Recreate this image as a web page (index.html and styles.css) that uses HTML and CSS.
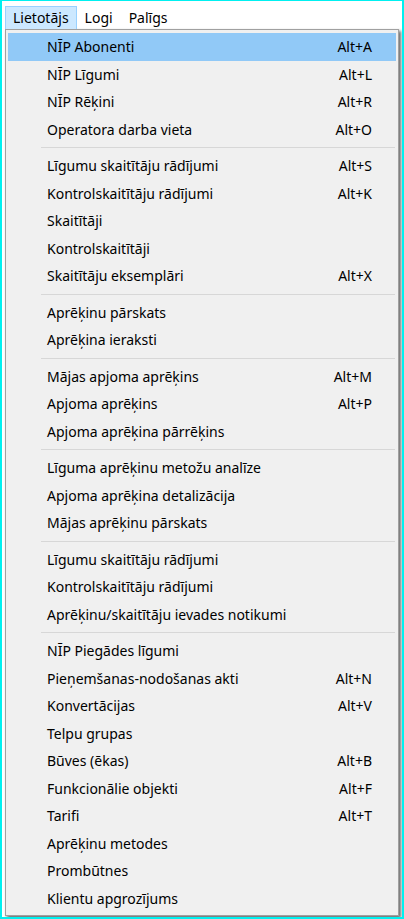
FILE: index.html
```html
<!DOCTYPE html>
<html lang="lv">
<head>
    <meta charset="UTF-8">
    <meta name="viewport" content="width=device-width, initial-scale=1.0">
    <title>Lietotājs</title>
    <link rel="stylesheet" href="styles.css">
</head>
<body>
<div class="screen">

    <div class="menubar">
        <span class="menubar-item open">Lietotājs</span>
        <span class="menubar-item">Logi</span>
        <span class="menubar-item">Palīgs</span>
    </div>

    <div class="menu">
        <div class="item active"><span>NĪP Abonenti</span><span class="key">Alt+A</span></div>
        <div class="item"><span>NĪP Līgumi</span><span class="key">Alt+L</span></div>
        <div class="item"><span>NĪP Rēķini</span><span class="key">Alt+R</span></div>
        <div class="item"><span>Operatora darba vieta</span><span class="key">Alt+O</span></div>
        <div class="sep"></div>
        <div class="item"><span>Līgumu skaitītāju rādījumi</span><span class="key">Alt+S</span></div>
        <div class="item"><span>Kontrolskaitītāju rādījumi</span><span class="key">Alt+K</span></div>
        <div class="item"><span>Skaitītāji</span></div>
        <div class="item"><span>Kontrolskaitītāji</span></div>
        <div class="item"><span>Skaitītāju eksemplāri</span><span class="key">Alt+X</span></div>
        <div class="sep"></div>
        <div class="item"><span>Aprēķinu pārskats</span></div>
        <div class="item"><span>Aprēķina ieraksti</span></div>
        <div class="sep"></div>
        <div class="item"><span>Mājas apjoma aprēķins</span><span class="key">Alt+M</span></div>
        <div class="item"><span>Apjoma aprēķins</span><span class="key">Alt+P</span></div>
        <div class="item"><span>Apjoma aprēķina pārrēķins</span></div>
        <div class="sep"></div>
        <div class="item"><span>Līguma aprēķinu metožu analīze</span></div>
        <div class="item"><span>Apjoma aprēķina detalizācija</span></div>
        <div class="item"><span>Mājas aprēķinu pārskats</span></div>
        <div class="sep"></div>
        <div class="item"><span>Līgumu skaitītāju rādījumi</span></div>
        <div class="item"><span>Kontrolskaitītāju rādījumi</span></div>
        <div class="item"><span>Aprēķinu/skaitītāju ievades notikumi</span></div>
        <div class="sep"></div>
        <div class="item"><span>NĪP Piegādes līgumi</span></div>
        <div class="item"><span>Pieņemšanas-nodošanas akti</span><span class="key">Alt+N</span></div>
        <div class="item"><span>Konvertācijas</span><span class="key">Alt+V</span></div>
        <div class="item"><span>Telpu grupas</span></div>
        <div class="item"><span>Būves (ēkas)</span><span class="key">Alt+B</span></div>
        <div class="item"><span>Funkcionālie objekti</span><span class="key">Alt+F</span></div>
        <div class="item"><span>Tarifi</span><span class="key">Alt+T</span></div>
        <div class="item"><span>Aprēķinu metodes</span></div>
        <div class="item"><span>Prombūtnes</span></div>
        <div class="item"><span>Klientu apgrozījums</span></div>
    </div>

</div>
</body>
</html>
```

FILE: styles.css
```css
body {
    margin: 0;
    font-family: "Noto Sans", "Open Sans", sans-serif;
    font-size: 14px;
    color: #000;
    background-color: #fff;
}
.screen {
    height: 919px;
    box-sizing: border-box;
    border: 2px solid #00f0f0;
    border-top-width: 1px;
    overflow: hidden;
    background-color: #fff;
}
.menubar {
    height: 28px;
    display: flex;
    align-items: flex-end;
    padding-left: 3px;
}
.menubar-item {
    height: 23px;
    line-height: 22px;
    box-sizing: border-box;
    padding: 0 7px;
    border: 1px solid transparent;
    border-bottom: none;
}
.menubar-item.open {
    background-color: #cce8ff;
    border-color: #99d1ff;
}
.menu {
    margin-left: 3px;
    width: 394px;
    box-sizing: border-box;
    padding: 3px 2px;
    border: 1px solid #a0a0a0;
    background-color: #f0f0f0;
    box-shadow: 2px 2px 3px rgba(0, 0, 0, 0.6);
}
.item {
    height: 27.5px;
    display: flex;
    justify-content: space-between;
    align-items: center;
    padding: 0 24px 0 39px;
}
.item.active {
    background-color: #91c9f7;
}
.sep {
    height: 1px;
    margin: 4px 1px 4px 33px;
    background-color: #d7d7d7;
}
```
